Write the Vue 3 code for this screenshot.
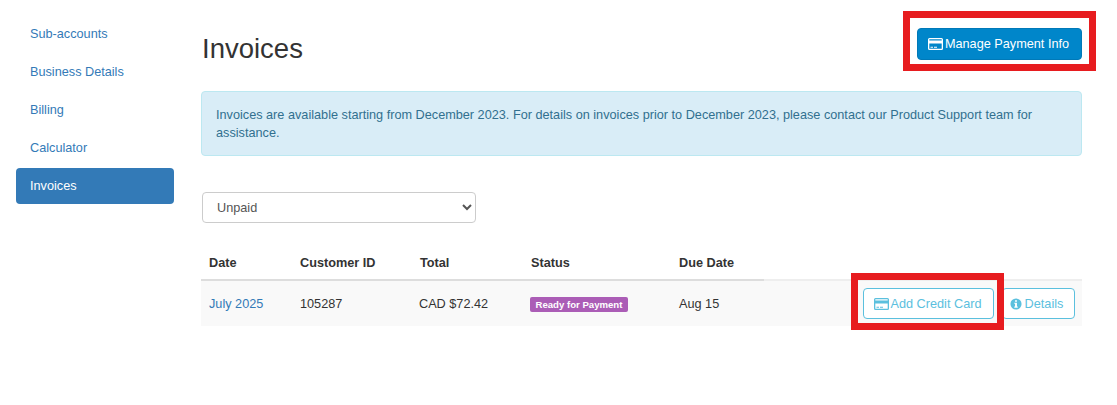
<script setup>
const navItems = ['Sub-accounts', 'Business Details', 'Billing', 'Calculator', 'Invoices']
</script>

<template>
  <div class="page">
    <nav class="side">
      <a v-for="item in navItems" :key="item" class="nav-item" :class="{ active: item === 'Invoices' }">{{ item }}</a>
    </nav>
    <main class="main">
      <header class="head">
        <h1>Invoices</h1>
        <button class="btn primary">
          <svg class="card" viewBox="0 0 15 12" width="15" height="12"><path fill="currentColor" fill-rule="evenodd" d="M1.500 0h12A1.500 1.500 0 0 1 15 1.500v9a1.500 1.500 0 0 1-1.500 1.500h-12A1.500 1.500 0 0 1 0 10.500v-9A1.500 1.500 0 0 1 1.500 0ZM1.300 1.200v1.300h12.400V1.200ZM1.300 5.500v5.300h12.400V5.500ZM2.500 8.800h2.500v1H2.500Zm3.500 0h3v1H6Z"/></svg>
          Manage Payment Info
          <span class="mark mark-top"></span>
        </button>
      </header>
      <div class="alert">Invoices are available starting from December 2023. For details on invoices prior to December 2023, please contact our Product Support team for assistance.</div>
      <select class="filter"><option>Unpaid</option></select>
      <table class="tbl">
        <thead>
          <tr>
            <th class="c1">Date</th>
            <th class="c2">Customer ID</th>
            <th class="c3">Total</th>
            <th class="c4">Status</th>
            <th class="c5">Due Date</th>
            <th class="c6"></th>
          </tr>
        </thead>
        <tbody>
          <tr>
            <td><a class="link">July 2025</a></td>
            <td>105287</td>
            <td class="total">CAD $72.42</td>
            <td class="status"><span class="label">Ready for Payment</span></td>
            <td>Aug 15</td>
            <td class="actions">
              <div class="action-row">
                <button class="btn outline add">
                  <svg class="card" viewBox="0 0 15 12" width="15" height="12"><path fill="currentColor" fill-rule="evenodd" d="M1.500 0h12A1.500 1.500 0 0 1 15 1.500v9a1.500 1.500 0 0 1-1.500 1.500h-12A1.500 1.500 0 0 1 0 10.500v-9A1.500 1.500 0 0 1 1.500 0ZM1.300 1.200v1.300h12.400V1.200ZM1.300 5.500v5.300h12.400V5.500ZM2.500 8.800h2.500v1H2.500Zm3.500 0h3v1H6Z"/></svg>
                  Add Credit Card
                  <span class="mark mark-row"></span>
                </button>
                <button class="btn outline details">
                  <svg viewBox="0 0 14 14" width="12" height="12"><path fill="currentColor" fill-rule="evenodd" d="M7 0.500a6.500 6.500 0 1 1 0 13a6.500 6.500 0 0 1 0-13ZM5.900 2.500v2h2.200v-2ZM5 5.500v1.200h0.900v3.300H5v1.300h4v-1.300h-0.900V5.500Z"/></svg>
                  Details
                </button>
              </div>
            </td>
          </tr>
        </tbody>
      </table>
    </main>
  </div>
</template>

<style>
html, body { margin: 0; background: #fff; }
</style>

<style scoped>
.page {
  width: 1117px;
  height: 405px;
  display: flex;
  box-sizing: border-box;
  padding: 16px 35px 0 16px;
  font-family: "Liberation Sans", Arial, sans-serif;
  font-size: 12.700px;
  line-height: 18px;
  color: #333;
  overflow: hidden;
}
.side {
  width: 158px;
  flex: none;
  display: flex;
  flex-direction: column;
  gap: 2px;
}
.nav-item {
  height: 36px;
  box-sizing: border-box;
  padding: 9px 14px;
  border-radius: 4px;
  color: #337ab7;
}
.nav-item.active {
  background: #337ab7;
  color: #fff;
}
.main {
  width: 881px;
  margin-left: 27px;
  flex: none;
}
.head {
  display: flex;
  justify-content: space-between;
  align-items: flex-start;
  height: 75px;
}
h1 {
  margin: 16px 0 0 1px;
  font-size: 27.500px;
  line-height: 34px;
  font-weight: 400;
  color: #333;
}
.btn {
  position: relative;
  display: inline-flex;
  align-items: center;
  gap: 2px;
  box-sizing: border-box;
  border-radius: 4px;
  font: inherit;
  padding: 0;
  justify-content: center;
}
.primary {
  width: 165px;
  height: 32px;
  margin-top: 12px;
  padding-right: 2px;
  background: #0086ca;
  border: 1px solid #0079b8;
  color: #fff;
}
.outline {
  height: 31px;
  background: #fff;
  border: 1px solid #5bc0de;
  color: #5bc0de;
}
.add { width: 131px; padding-right: 2px; }
.details { width: 73px; margin-left: 8px; padding-right: 4px; gap: 3px; }
.mark {
  position: absolute;
  border: 7px solid #e71c1f;
  box-sizing: border-box;
  pointer-events: none;
}
.mark-top {
  left: -15px;
  top: -18px;
  width: 193px;
  height: 60px;
}
.mark-row {
  left: -13px;
  top: -16px;
  width: 153px;
  height: 57px;
  z-index: 2;
}
.alert {
  height: 65px;
  box-sizing: border-box;
  padding: 14px 14px;
  background: #d9edf7;
  border: 1px solid #bce8f1;
  border-radius: 4px;
  color: #31708f;
}
.filter {
  display: block;
  width: 274px;
  height: 31px;
  margin: 36px 0 0 1px;
  padding: 1px 12px 0 10px;
  box-sizing: border-box;
  background: #fff;
  border: 1px solid #ccc;
  border-radius: 4px;
  font: inherit;
  color: #555;
}
.tbl {
  width: 881px;
  margin-top: 21px;
  border-collapse: collapse;
  table-layout: fixed;
}
th {
  height: 36px;
  box-sizing: border-box;
  padding: 3px 8px 0;
  text-align: left;
  font-weight: 700;
  border-bottom: 2px solid #ddd;
}
.c1 { width: 91px; }
.c2 { width: 120px; }
.c3 { width: 111px; }
.c4 { width: 148px; }
.c5 { width: 93px; }
.c6 { border-bottom-color: #eee; }
td {
  height: 46px;
  box-sizing: border-box;
  padding: 1px 8px 0;
  background: #f9f9f9;
  vertical-align: middle;
}
.total { padding-left: 7px; white-space: nowrap; }
.status { padding-left: 7px; }
.link { color: #337ab7; }
.label {
  display: inline-block;
  padding: 0 5.500px;
  height: 15px;
  line-height: 15px;
  vertical-align: middle;
  background: #ab5db6;
  color: #fff;
  font-size: 9.600px;
  font-weight: 700;
  border-radius: 2px;
  white-space: nowrap;
}
.actions {
  padding: 0 7px 0 0;
}
.action-row {
  display: flex;
  justify-content: flex-end;
  align-items: center;
}
</style>
